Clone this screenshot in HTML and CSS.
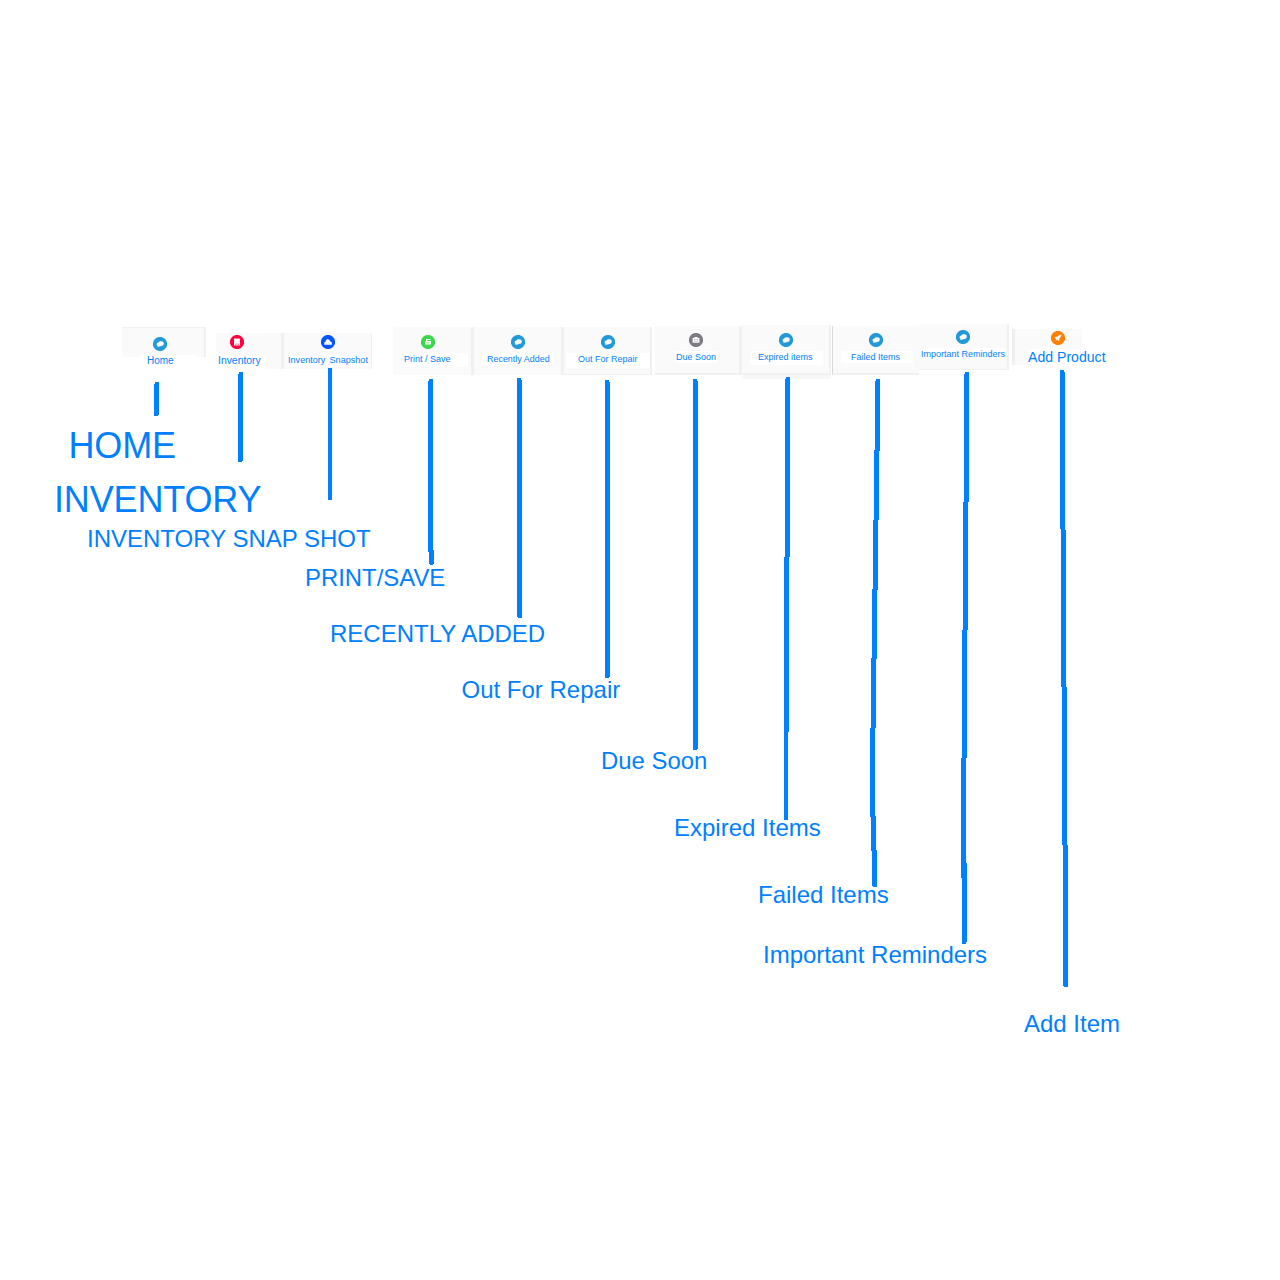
FILE: index.html
```
<!DOCTYPE html>
<html lang="en">
<head>
<meta charset="utf-8">
<title>Toolbar guide</title>
<link rel="stylesheet" href="styles.css">
</head>
<body>
<svg class="defs" width="0" height="0" aria-hidden="true">
  <symbol id="chat" viewBox="0 0 14 14"><circle cx="7" cy="7" r="7.1"/><path class="glyph" d="M3.6 7C3.6 6 4.6 5.6 5.4 5.4C6 4.5 7 4.3 8 4.3C9.8 4.3 10.8 5 10.8 6.4C10.8 7.8 9.8 8.6 8.6 8.8C7.8 9.4 6.8 9.5 6 9.4L4.3 10.1L4.6 8.9C3.9 8.5 3.6 7.9 3.6 7Z"/></symbol>
</svg>
<main class="canvas">
  <nav class="toolbar">
    <div class="tile home"><svg class="icon blue"><use href="#chat"/></svg><span class="label">Home</span></div>
    <div class="tile inventory"><svg class="icon red" viewBox="0 0 14 14"><circle cx="7" cy="7" r="7.1"/><path class="glyph" d="M4 3.6H10V10.4H4Z"/><path class="detail" d="M5.3 9.2H6.3M7 8.6V9.4M7.7 9.2H8.7"/></svg><span class="label">Inventory</span></div>
    <div class="tile snapshot"><svg class="icon royal" viewBox="0 0 14 14"><circle cx="7" cy="7" r="7.1"/><path class="glyph" d="M3.3 9.8V7.5L4.6 6.7L5 5L6.8 4L8.5 5L9 6.2L10.8 7.2V9.8Z"/></svg><span class="label">Inventory Snapshot</span></div>
    <div class="tile print"><svg class="icon green" viewBox="0 0 14 14"><circle cx="7" cy="7" r="7.1"/><path class="glyph" d="M4 6.5H5V4H9.5V5H6.2V6H10V9.5H4Z"/><path class="detail" d="M5.5 7.8H8.5"/></svg><span class="label">Print / Save</span></div>
    <div class="tile recent"><svg class="icon blue"><use href="#chat"/></svg><span class="label">Recently Added</span></div>
    <div class="tile repair"><svg class="icon blue"><use href="#chat"/></svg><span class="label">Out For Repair</span></div>
    <div class="tile due"><svg class="icon gray" viewBox="0 0 14 14"><circle cx="7" cy="7" r="7.1"/><path class="glyph" d="M3.6 5H5.5V4H8.5V5H10.4V9.8H3.6Z"/><path class="detail" d="M5.3 6.5H6.4M7.6 6.5H8.7M5.3 8.3H6.4M7.6 8.3H8.7"/></svg><span class="label">Due Soon</span></div>
    <div class="tile expired"><svg class="icon blue"><use href="#chat"/></svg><span class="label">Expired items</span></div>
    <div class="tile failed"><svg class="icon blue"><use href="#chat"/></svg><span class="label">Failed Items</span></div>
    <div class="tile important"><svg class="icon blue"><use href="#chat"/></svg><span class="label">Important Reminders</span></div>
    <div class="tile add"><svg class="icon orange" viewBox="0 0 14 14"><circle cx="7" cy="7" r="7.1"/><path class="glyph" d="M10.5 3.5L8 4.3L6.7 5.6L4.2 6L3.8 7.2L5.4 7.4L4.4 9.6L6.7 8.6L7 10.2L8.3 9.2L8.4 7.2L9.8 5.7Z"/></svg><span class="label">Add Product</span></div>
  </nav>

  <svg class="lines" viewBox="0 0 1280 1280" aria-hidden="true">
    <path d="M155 382H159V415H158V416H154V384H155Z"/>
    <path d="M239 372H243V461H242V462H238V374H239Z"/>
    <path d="M328 368H332V500H328Z"/>
    <path d="M429 379H433V550H434V564H433V565H430V564H429V552H428V381H429Z"/>
    <path d="M517 378H521V380H522V618H518V617H517Z"/>
    <path d="M605 380H609V382H610V677H609V678H605Z"/>
    <path d="M693 379H697V381H698V749H697V750H693Z"/>
    <path d="M786 377H790V557H789V732H788V820H784V557H785V379H786Z"/>
    <path d="M876 379H880V451H879V520H878V590H877V659H876V728H875V816H876V850H877V887H873V886H872V851H871V817H870V728H871V658H872V589H873V520H874V450H875V381H876Z"/>
    <path d="M965 372H969V502H968V630H967V758H966V863H967V942H966V944H962V878H961V758H962V630H963V502H964V374H965Z"/>
    <path d="M1060 370H1064V372H1065V530H1066V687H1067V845H1068V987H1064V986H1063V845H1062V687H1061V529H1060Z"/>
  </svg>

  <p class="note large n-home">HOME</p>
  <p class="note large n-inventory">INVENTORY</p>
  <p class="note n-snapshot">INVENTORY SNAP SHOT</p>
  <p class="note n-print">PRINT/SAVE</p>
  <p class="note n-recent">RECENTLY ADDED</p>
  <p class="note n-repair">Out For Repair</p>
  <p class="note n-due">Due Soon</p>
  <p class="note n-expired">Expired Items</p>
  <p class="note n-failed">Failed Items</p>
  <p class="note n-important">Important Reminders</p>
  <p class="note n-add">Add Item</p>
</main>
</body>
</html>
```
FILE: styles.css
```
* { box-sizing: border-box; }

body {
  margin: 0;
  background: #fff;
  color: #0080ff;
  font-family: "Liberation Sans", Arial, sans-serif;
}

.defs { display: none; }

.canvas {
  position: relative;
  width: 1280px;
  height: 1280px;
  overflow: hidden;
}

/* Toolbar */
.toolbar {
  display: flex;
  align-items: flex-start;
  padding: 324px 0 0 122px;
}

.tile {
  flex: none;
  display: flex;
  flex-direction: column;
  align-items: flex-start;
  background: #fafafa;
  border: 0 solid #f0f0f0;
}

.icon { flex: none; display: block; width: 14px; height: 14px; fill: currentColor; }
.glyph { fill: #fff; }
.detail { fill: none; stroke: currentColor; stroke-width: .8; }
.blue { color: #2299d8; }
.red { color: #ff0040; }
.royal { color: #0055ff; }
.green { color: #3bd84c; }
.gray { color: #7b7b82; }
.orange { color: #ff8000; }

.label {
  flex: none;
  height: 12px;
  background: #fff;
  font-size: 9px;
  line-height: 12px;
  white-space: nowrap;
}

.home { width: 84px; height: 30px; margin-top: 3px; border-width: 1px 2px 0 0; }
.home .icon { margin: 9px 0 0 31px; }
.home .label { margin: 4px 0 0 20px; padding: 0 24px 0 5px; font-size: 10px; }

.inventory { width: 68px; height: 36px; margin: 9px 0 0 10px; border-right-width: 3px; }
.inventory .icon { margin: 2px 0 0 14px; }
.inventory .label { margin: 6px 0 0; padding: 0 5px 0 2px; height: 14px; font-size: 10.4px; }

.snapshot { width: 88px; height: 36px; margin-top: 9px; border-right-width: 1px; }
.snapshot .icon { margin: 2px 0 0 36.5px; }
.snapshot .label { margin: 5px 0 0 4px; height: 13px; line-height: 13px; font-size: 9.1px; word-spacing: 1.6px; }

.print { width: 81px; height: 48px; margin: 3px 0 0 21px; border-right-width: 3px; }
.print .icon { margin: 8px 0 0 28px; }
.print .label { margin: 4px 0 0 11px; padding-right: 17px; height: 14px; }

.recent { width: 90px; height: 48px; margin-top: 3px; border-right-width: 3px; }
.recent .icon { margin: 8px 0 0 36.5px; }
.recent .label { margin: 4px 0 0 8px; padding: 0 4px 0 5px; font-size: 8.95px; line-height: 13px; }

.repair { width: 88px; height: 48px; margin-top: 3px; border-width: 0 2px 1px 0; }
.repair .icon { margin: 8px 0 0 37px; }
.repair .label { margin: 4px 0 0 3px; padding: 0 12px 0 11px; height: 15px; }

.due { width: 87px; height: 49px; margin: 2px 0 0 3px; border-width: 0 3px 2px 0; }
.due .icon { margin: 7px 0 0 33.5px; }
.due .label { margin: 4px 0 0 20px; padding: 0 2px 0 1px; }

/* The lower edge has a lighter strip under its rule */
.expired { width: 89px; height: 50px; margin-top: 1px; border-width: 0 2px 2px 0; box-shadow: 0 4px 0 #f7f7f7; }
.expired .icon { margin: 8px 0 0 37px; }
.expired .label { margin: 4px 0 0 8px; padding: 0 10px 0 8px; height: 14px; }

.failed { width: 87px; height: 49px; margin: 2px 0 0 1px; border-width: 0 0 2px 1px; border-left-color: #d8d8d8; }
.failed .icon { margin: 7px 0 0 36px; }
.failed .label { margin: 4px 0 0 8px; padding: 0 13px 0 10px; line-height: 13px; }

.important { width: 90px; height: 46px; border-width: 0 2px 1px 0; }
.important .icon { margin: 6px 0 0 37px; }
.important .label { margin: 4px 0 0 2px; }

.add { width: 70px; height: 36px; margin: 5px 0 0 3px; border-left-width: 3px; }
.add .icon { margin: 2px 0 0 36px; }
.add .label { margin: 4px 0 0 13px; height: 16px; line-height: 16px; font-size: 14.1px; }

/* Connectors from toolbar buttons to their notes */
.lines {
  position: absolute;
  inset: 0;
  width: 1280px;
  height: 1280px;
  fill: #0080ff;
  shape-rendering: crispEdges;
}

.note {
  position: absolute;
  margin: 0;
  font-size: 24px;
  line-height: 24px;
  white-space: nowrap;
}
.large { font-size: 36px; line-height: 36px; letter-spacing: -.15px; }

.n-home { left: 68.5px; top: 428px; }
.n-inventory { left: 54px; top: 482px; }
.n-snapshot { left: 87px; top: 527px; }
.n-print { left: 305px; top: 566px; font-size: 23.9px; }
.n-recent { left: 330px; top: 622px; }
.n-repair { left: 461.5px; top: 678px; }
.n-due { left: 601px; top: 749px; font-size: 23.9px; }
.n-expired { left: 674px; top: 816px; }
.n-failed { left: 758px; top: 883px; }
.n-important { left: 763px; top: 943px; }
.n-add { left: 1024px; top: 1012px; }
```
